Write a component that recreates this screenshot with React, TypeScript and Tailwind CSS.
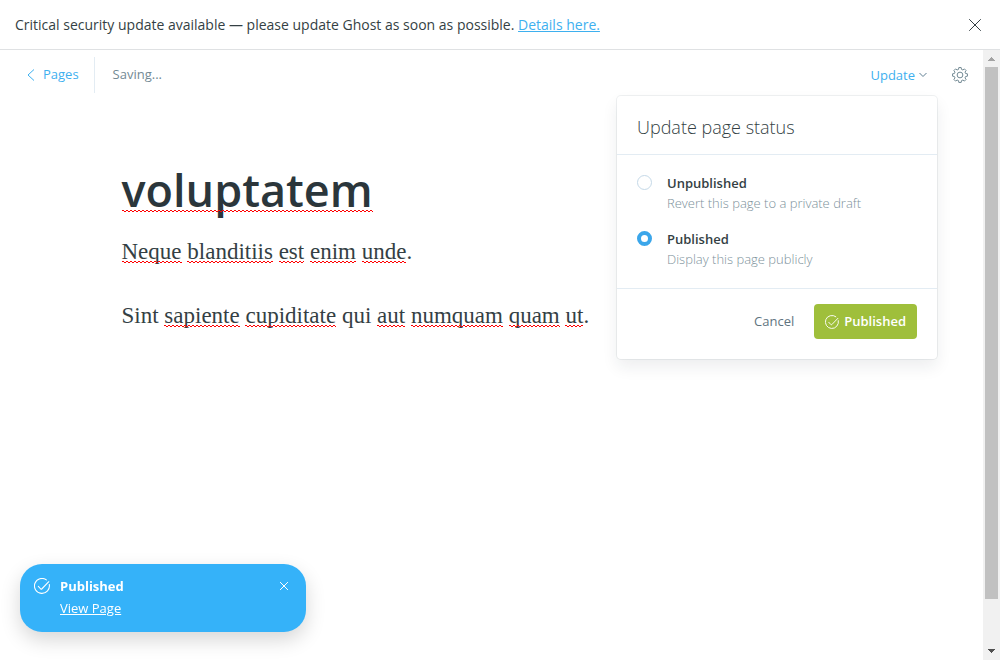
import { useState } from "react";
import type { ReactNode } from "react";

function CheckCircle({ className }: { className: string }) {
  return (
    <svg viewBox="0 0 24 24" fill="none" stroke="currentColor" strokeWidth="1.6" strokeLinecap="round" strokeLinejoin="round" className={className} aria-hidden="true">
      <path d="M6.500 12.500l3.700 4c.4.4 1 .4 1.400 0L22.200 5.600" />
      <path d="M22.900 9.700A11.200 11.200 0 1 1 18.600 2.900" />
    </svg>
  );
}

function Cross({ className, weight = 1 }: { className: string; weight?: number }) {
  return (
    <svg viewBox="0 0 12 12" fill="none" stroke="currentColor" strokeWidth={weight} strokeLinecap="round" className={className} aria-hidden="true">
      <path d="M0.500 0.500l11 11M11.500 0.500l-11 11" />
    </svg>
  );
}

const gearPoints = Array.from({ length: 8 }, (_, tooth) =>
  [
    [-9, 11.3],
    [9, 11.3],
    [15, 8.7],
    [30, 8.7],
  ].map(([offset, radius]) => {
    const angle = ((tooth * 45 + offset) * Math.PI) / 180;
    return `${(12 + radius * Math.sin(angle)).toFixed(2)},${(12 - radius * Math.cos(angle)).toFixed(2)}`;
  })
)
  .flat()
  .join(" ");

function Gear({ className }: { className: string }) {
  return (
    <svg viewBox="0 0 24 24" fill="none" stroke="currentColor" strokeWidth="1.5" strokeLinejoin="round" className={className} aria-hidden="true">
      <circle cx="12" cy="12" r="4.300" />
      <polygon points={gearPoints} />
    </svg>
  );
}

function Misspelt({ children }: { children: ReactNode }) {
  return (
    <span className="relative">
      {children}
      <svg className="absolute bottom-(--rise) left-0 h-[2px] w-full overflow-hidden" stroke="#ff0000" shapeRendering="crispEdges" aria-hidden="true">
        <line x1="0" x2="2000" y1="0.5" y2="0.5" strokeDasharray="2 2" />
        <line x1="-2" x2="2000" y1="1.5" y2="1.5" strokeDasharray="2 2" />
      </svg>
    </span>
  );
}

const options = [
  { id: "draft", label: "Unpublished", note: "Revert this page to a private draft" },
  { id: "published", label: "Published", note: "Display this page publicly" },
];

function StatusMenu() {
  const [status, setStatus] = useState("published");
  return (
    <section className="absolute top-full -right-[10px] z-10 mt-[3px] w-80 rounded-[4px] bg-white shadow-[0_0_0_1px_rgba(99,114,130,0.1),0_8px_16px_rgba(27,39,51,0.08)]">
      <h2 className="border-b border-[#e3ecf3] px-5 pt-[18px] pb-[14px] text-[18px] leading-[26px] font-light text-[#343f44]">Update page status</h2>
      <div className="flex flex-col gap-4 px-5 pt-[18px] pb-[19px]">
        {options.map((o) => (
          <div key={o.id} className="flex gap-[15px]">
            <input
              type="radio"
              id={o.id}
              name="status"
              checked={status === o.id}
              onChange={() => setStatus(o.id)}
              className="mt-[2px] size-[15px] shrink-0 appearance-none rounded-full border border-[#c5d9e8] bg-white checked:border-4 checked:border-[#3ba6ea]"
            />
            <label htmlFor={o.id} className="text-[13px] leading-5 font-light text-[#7d919b]">
              <span className="block font-semibold text-[#343f44]">{o.label}</span>
              {o.note}
            </label>
          </div>
        ))}
      </div>
      <div className="flex items-center justify-end gap-5 border-t border-[#e3ecf3] px-5 pt-[15px] pb-5 text-[13px]">
        <button type="button" className="text-[#5f7480]">Cancel</button>
        <button type="button" className="flex h-[35px] items-center gap-[5px] rounded-[4px] bg-[#9fbf3b] px-[11px] font-semibold text-white">
          <CheckCircle className="size-[14px]" />
          Published
        </button>
      </div>
    </section>
  );
}

export default function App() {
  return (
    <div className="flex h-screen flex-col bg-white font-['Open_Sans','Noto_Sans',sans-serif] text-[#343f44]">
      <aside className="flex items-center justify-between border-b border-[#dfe1e3] px-[15px] py-[14px] text-[14px] leading-[21px]">
        <p>
          Critical security update available — please update Ghost as soon as possible.{" "}
          <a href="#details" className="text-[#3eb0ef] underline">Details here.</a>
        </p>
        <button type="button" aria-label="Close alert" className="px-[4px]">
          <Cross className="size-3" />
        </button>
      </aside>

      <div className="flex min-h-0 flex-1">
        <main className="min-w-0 flex-1">
          <header className="flex items-center justify-between pt-[7px] pr-[15px] pl-[27px] text-[13px]">
            <div className="flex items-center text-[#738a94]">
              <a href="#pages" className="flex h-9 items-center gap-2 border-r border-[#e3ecf3] pr-[15px] text-[#3eb0ef]">
                <svg viewBox="0 0 8 12" fill="none" stroke="currentColor" className="h-3 w-2" aria-hidden="true">
                  <path d="M7 .5L1 6l6 5.500" />
                </svg>
                Pages
              </a>
              <span className="pl-[18px]">Saving...</span>
            </div>
            <div className="flex items-center gap-[25px]">
              <div className="relative">
                <button type="button" className="flex h-9 items-center gap-1 leading-5 text-[#3eb0ef]">
                  Update
                  <svg viewBox="0 0 8 6" fill="none" stroke="#5f7f92" className="h-[6px] w-2" aria-hidden="true">
                    <path d="M.5 1L4 4.500 7.500 1" />
                  </svg>
                </button>
                <StatusMenu />
              </div>
              <button type="button" aria-label="Settings" className="text-[#738a94]">
                <Gear className="size-4" />
              </button>
            </div>
          </header>

          <article className="mx-auto max-w-[740px] pt-[67px]">
            <h1 className="text-[45px] leading-[60px] font-semibold text-[#2b363b] [--rise:8px]">
              <Misspelt>voluptatem</Misspelt>
            </h1>
            <div className="flex flex-col gap-8 pt-4 font-['Liberation_Serif',serif] text-[23px] leading-8 [--rise:1px]">
              <p>
                <Misspelt>Neque</Misspelt> <Misspelt>blanditiis</Misspelt> <Misspelt>est</Misspelt> <Misspelt>enim</Misspelt> <Misspelt>unde</Misspelt>.
              </p>
              <p>
                Sint <Misspelt>sapiente</Misspelt> <Misspelt>cupiditate</Misspelt> qui <Misspelt>aut</Misspelt> <Misspelt>numquam</Misspelt> <Misspelt>quam</Misspelt> <Misspelt>ut</Misspelt>.
              </p>
            </div>
          </article>
        </main>

        <div className="flex w-[17px] flex-col items-center bg-[#f1f1f1]" aria-hidden="true">
          <svg viewBox="0 0 17 17" className="size-[17px]" shapeRendering="crispEdges">
            <path d="M8 7h1v1h1v1h1v1h1v1H5v-1h1V9h1V8h1z" fill="#a3a3a3" />
          </svg>
          <div className="w-[13px] flex-1 bg-[#c1c1c1]" />
          <svg viewBox="0 0 17 61" className="h-[61px] w-[17px]" shapeRendering="crispEdges">
            <path d="M5 50h7v1h-1v1h-1v1H9v1H8v-1H7v-1H6v-1H5z" fill="#505050" />
          </svg>
        </div>
      </div>

      <aside className="fixed bottom-7 left-5 flex w-[286px] items-start gap-[10px] rounded-[22px] bg-[#35b2f9] px-[14px] pt-[11px] pb-[13px] text-[13px] leading-[22px] text-white shadow-[0_8px_20px_rgba(0,0,0,0.16)]">
        <CheckCircle className="mt-[3px] size-4" />
        <div className="flex-1">
          <p className="font-bold">Published</p>
          <a href="#view" className="underline">View Page</a>
        </div>
        <button type="button" aria-label="Dismiss" className="flex h-[22px] items-center px-[4px]">
          <Cross className="size-2" weight={1.5} />
        </button>
      </aside>
    </div>
  );
}
